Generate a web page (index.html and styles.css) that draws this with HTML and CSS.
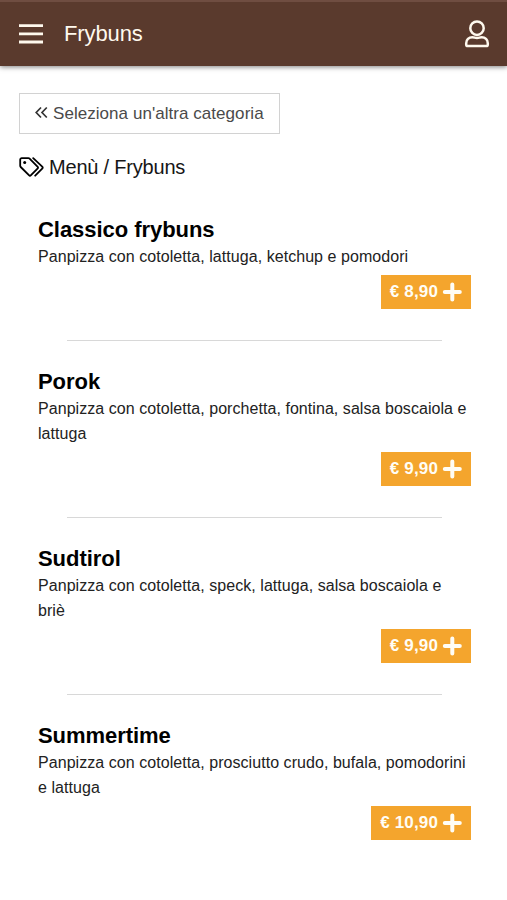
FILE: index.html
```html
<!DOCTYPE html>
<html lang="it">
<head>
<meta charset="utf-8">
<title>Frybuns</title>
<link rel="stylesheet" href="styles.css">
</head>
<body>
<svg width="0" height="0" class="sprite">
  <symbol id="plus" viewBox="0 0 20 20"><path d="M10.300 2.500v15M2.800 10h15" fill="none" stroke="currentColor" stroke-width="4" stroke-linecap="round"/></symbol>
</svg>
<header class="bar">
  <svg class="burger" viewBox="0 0 24 20"><path d="M0 1.600h24M0 9.800h24M0 18h24" stroke="currentColor" stroke-width="2.800"/></svg>
  <span class="bar-title">Frybuns</span>
  <svg class="user" viewBox="0 0 24 28" fill="none" stroke="currentColor" stroke-width="2.500"><circle cx="12" cy="8.200" r="6.700"/><path d="M7.300 17.200c2 0 2.600.8 4.700.8s2.700-.8 4.700-.8c3.500 0 6.100 2.700 6.100 6v1.300c0 .9-.7 1.600-1.600 1.600H2.800c-.9 0-1.600-.7-1.600-1.600v-1.300c0-3.300 2.600-6 6.100-6z"/></svg>
</header>
<main>
  <a class="back"><svg class="chevrons" viewBox="0 0 13 13"><path d="M6 1.500L1.200 6.500 6 11.500M11.800 1.500L7 6.500l4.800 5" fill="none" stroke="currentColor" stroke-width="1.700"/></svg><span>Seleziona un'altra categoria</span></a>
  <div class="crumb"><svg class="tags" viewBox="0 0 25 20" fill="none" stroke="currentColor" stroke-width="1.800" stroke-linejoin="round" stroke-linecap="round"><path d="M1.200 2.700v6.100c0 .5.200.9.500 1.200l8.200 8.200c.6.600 1.500.6 2.100 0l6.500-6.500c.6-.6.600-1.500 0-2.100L10.600 1.700c-.3-.3-.7-.5-1.200-.5H2.700c-.8 0-1.500.7-1.500 1.500z"/><path d="M14.200 1.200l9 8.500c.6.600.6 1.400 0 2l-7 7"/><circle cx="5.700" cy="5.600" r="1.500" fill="currentColor" stroke="none"/></svg><span>Menù / Frybuns</span></div>
  <section class="items">
    <article class="item">
      <h2>Classico frybuns</h2>
      <p>Panpizza con cotoletta, lattuga, ketchup e pomodori</p>
      <button class="price"><span>€ 8,90</span><svg><use href="#plus"/></svg></button>
    </article>
    <article class="item">
      <h2>Porok</h2>
      <p>Panpizza con cotoletta, porchetta, fontina, salsa boscaiola e<br>lattuga</p>
      <button class="price"><span>€ 9,90</span><svg><use href="#plus"/></svg></button>
    </article>
    <article class="item">
      <h2>Sudtirol</h2>
      <p>Panpizza con cotoletta, speck, lattuga, salsa boscaiola e<br>briè</p>
      <button class="price"><span>€ 9,90</span><svg><use href="#plus"/></svg></button>
    </article>
    <article class="item">
      <h2>Summertime</h2>
      <p>Panpizza con cotoletta, prosciutto crudo, bufala, pomodorini<br>e lattuga</p>
      <button class="price"><span>€ 10,90</span><svg><use href="#plus"/></svg></button>
    </article>
  </section>
</main>
</body>
</html>
```
FILE: styles.css
```css
* { box-sizing: border-box; }
body { margin: 0; background: #fff; color: #000; font-family: "Liberation Sans", Arial, sans-serif; overflow: hidden; }
.sprite { display: block; }
.bar { display: flex; align-items: center; height: 66px; padding: 0 17px 0 19px; background: #5a3a2d; border-top: 2px solid #6f4d41; color: #fff9ee; box-shadow: 0 1px 5px rgba(0, 0, 0, .5); }
.burger { width: 24px; height: 20px; }
.bar-title { margin-left: 21px; font-size: 22px; line-height: 26px; letter-spacing: -.1px; white-space: nowrap; }
.user { width: 26px; height: 28px; margin-left: auto; }
main { padding: 27px 19px 0; }
.back { display: flex; align-items: center; width: 261px; height: 41px; padding: 0 0 0 15px; border: 1px solid #d2d2d2; color: #4a4a4a; font-size: 17px; letter-spacing: .05px; white-space: nowrap; }
.chevrons { width: 13px; height: 13px; margin: -2px 5px 0 0; color: #333; }
.crumb { display: flex; align-items: center; gap: 5px; height: 26px; margin-top: 20px; color: #161616; font-size: 20px; letter-spacing: -.2px; white-space: nowrap; }
.tags { width: 25px; height: 20px; color: #000; }
.items { padding: 37px 17px 0 19px; }
.item { display: flex; flex-direction: column; }
.item + .item::before { content: ""; height: 1px; margin: 31px 29px 28px; background: #d8d8d8; }
h2 { margin: 0 0 1px; font-size: 22px; line-height: 26px; font-weight: 700; letter-spacing: -.05px; }
p { margin: 0; color: #222; font-size: 16px; line-height: 25px; letter-spacing: .055px; white-space: nowrap; }
.price { display: flex; align-items: center; align-self: flex-end; gap: 4px; height: 34px; margin-top: 6px; padding: 0 9px; border: 0; background: #f4a52d; color: #fffdf5; font: 700 17px "Liberation Sans", Arial, sans-serif; letter-spacing: .15px; white-space: nowrap; }
.price svg { width: 20px; height: 20px; }
```
